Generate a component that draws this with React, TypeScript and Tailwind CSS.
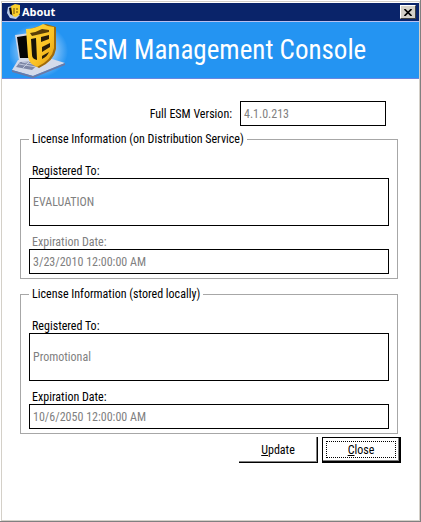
import React, { useId } from "react";

function ShieldLogo({ className }: { className: string }) {
  return (
    <svg className={className} viewBox="0 0 60 56" aria-hidden="true">
      <defs>
        <linearGradient id="gold" x1="0" y1="0" x2="1" y2="1">
          <stop offset="0" stopColor="#ffd83a" />
          <stop offset="0.6" stopColor="#fbc225" />
          <stop offset="1" stopColor="#e09c10" />
        </linearGradient>
        <radialGradient id="glow">
          <stop offset="0.3" stopColor="#d5e9ff" stopOpacity="0.85" />
          <stop offset="1" stopColor="#d5e9ff" stopOpacity="0" />
        </radialGradient>
      </defs>
      <ellipse cx="28" cy="29" rx="30" ry="27" fill="url(#glow)" />
      <path d="M5 13 L20 11 L24 38 L9 38 Z" fill="#d3d9e8" />
      <path d="M7 15 L20 13 L23 36 L10 36 Z" fill="#050505" />
      <path d="M8 38 L42 37 L55 41 L23 54 L2 48 Z" fill="#d4daea" />
      <path d="M2 48 L23 54 L55 41 L55 43 L23 56 L2 50 Z" fill="#6b79a6" />
      <path d="M10 40 L32 39 L22 48 L6 45 Z" fill="#7d87a6" />
      <path d="M9 42 L26 45 M12 40 L28 43 M13 46 L20 39" stroke="#d0d7e8" strokeWidth="0.8" />
      <path d="M20 7 L36 2 L46 5 L46 27 Q44 39 29 46 Q20 42 20 36 Z" fill="#a06a0a" />
      <path d="M16 7 Q25 7 33 2 Q38 5 44 5 L44 26 Q42 38 27 45 Q19 42 18 35 Z" fill="url(#gold)" />
      <path d="M21 17 L26 16 L27 38 Q22 37 22 33 Z" fill="#17130a" />
      <path d="M20 11 Q27 10 32 7 L39 8 L39 10 L22 14 Z" fill="#5a3e08" />
      <path d="M31 15 L39 13 L39 17 L31 20 Z M32 25 L40 21 L40 25 L32 30 Z M32 34 L39 30 Q37 35 32 37 Z" fill="#2a1d08" />
    </svg>
  );
}

function TitleIcon() {
  return (
    <svg className="size-4 shrink-0" viewBox="0 0 16 16" aria-hidden="true">
      <path d="M2 3 L6 2 L6 10 L14 11 L10 15 L4 14 L1 9 Z" fill="#b9cbe8" />
      <path d="M3 4 L7 3 L8 12 L4 10 Z" fill="#0a0a0a" />
      <path d="M5 2 L9 0 L14 1 L14 9 Q13 12 9 13 Q6 12 6 9 Z" fill="#fbd02c" />
      <path d="M8 4 L8 10 M10 5 L12 5 M10 8 L12 8" stroke="#6b4a08" strokeWidth="1" />
    </svg>
  );
}

function Field({ label, value, tall, muted }: { label: string; value: string; tall?: boolean; muted?: boolean }) {
  const id = useId();
  return (
    <div className="flex flex-col">
      <label htmlFor={id} className={`pl-[3px] leading-[14px] ${muted ? "text-[#808080]" : "text-black"}`}>
        {label}
      </label>
      <input
        id={id}
        readOnly
        defaultValue={value}
        className={`w-full border border-black bg-white px-[3px] text-[#808080] outline-none ${tall ? "h-12" : "h-[25px]"}`}
      />
    </div>
  );
}

function License({ source, registeredTo, expires, muted }: { source: string; registeredTo: string; expires: string; muted?: boolean }) {
  return (
    <fieldset className="min-w-0 border border-[#a7a7a7] px-2 pb-1">
      <legend className="px-[3px] leading-[13px]">License Information ({source})</legend>
      <div className="flex flex-col gap-[9px] pt-[18px]">
        <Field label="Registered To:" value={registeredTo} tall />
        <Field label="Expiration Date:" value={expires} muted={muted} />
      </div>
    </fieldset>
  );
}

export default function App() {
  return (
    <div className="flex min-h-screen flex-col border-r border-b border-[#808080] bg-white font-['Roboto_Condensed',Roboto,Arial,sans-serif] text-xs text-black">
      <div className="ml-px mt-px flex grow flex-col border border-[#d4d0c8]">
        <header className="mt-px flex h-[18px] items-center bg-[#0a246a] pl-1 pr-[3px] text-white">
          <TitleIcon />
          <h1 className="grow font-['Open_Sans',Tahoma,sans-serif] text-[11px] font-bold leading-[18px]">About</h1>
          <button
            type="button"
            aria-label="Close window"
            className="flex h-3.5 w-4 items-center justify-center border border-t-white border-l-white border-r-[#404040] border-b-[#404040] bg-[#d4d0c8]"
          >
            <svg viewBox="0 0 8 7" className="h-[7px] w-2" aria-hidden="true">
              <path d="M0.5 0 L7.5 7 M7.5 0 L0.5 7" stroke="#000" strokeWidth="1.6" />
            </svg>
          </button>
        </header>
        <div className="flex h-[58px] items-center border-y border-t-[#b9bff0] border-b-[#6a86e0] bg-[#2494f2] pl-2">
          <ShieldLogo className="h-14 w-[60px] shrink-0" />
          <p className="whitespace-nowrap pl-2.5 text-[27px] leading-9 text-white">ESM Management Console</p>
        </div>
        <main className="flex flex-col pl-[18px] pr-[18px] pt-[22px]">
          <div className="flex items-center justify-end gap-2 pr-[15px]">
            <label htmlFor="version">Full ESM Version:</label>
            <input
              id="version"
              readOnly
              defaultValue="4.1.0.213"
              className="h-[25px] w-[146px] border border-black bg-white px-[3px] text-[#808080] outline-none"
            />
          </div>
          <div className="flex flex-col gap-[9px] pr-[3px] pt-[7px]">
            <License source="on Distribution Service" registeredTo="EVALUATION" expires="3/23/2010 12:00:00 AM" muted />
            <License source="stored locally" registeredTo="Promotional" expires="10/6/2050 12:00:00 AM" />
          </div>
          <div className="flex justify-end gap-1 pt-[3px]">
            <button type="button" className="h-[26px] w-[79px] border-r border-b border-black bg-white shadow-[inset_-1px_-1px_0_#808080]">
              <u>U</u>pdate
            </button>
            <button type="button" className="h-[26px] w-[79px] border border-r-2 border-b-2 border-black bg-white p-[3px] shadow-[inset_-1px_-1px_0_#808080]">
              <span className="flex h-full items-center justify-center border border-dotted border-black">
                <u>C</u>lose
              </span>
            </button>
          </div>
        </main>
      </div>
    </div>
  );
}
